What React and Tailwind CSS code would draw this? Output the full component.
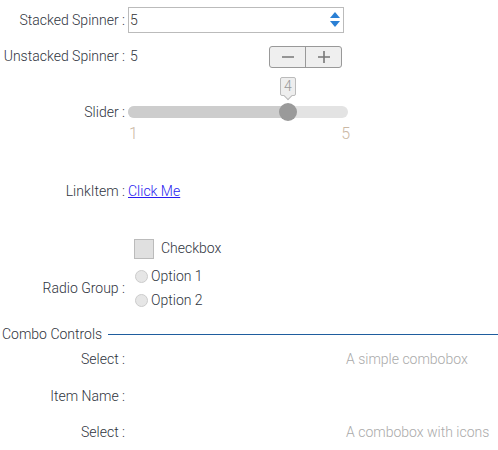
const font = { fontFamily: "Roboto, 'Liberation Sans', sans-serif" };

function Label({ children }) {
  return (
    <div className="w-[125px] shrink-0 text-right whitespace-nowrap text-[14px] font-light text-[#2f3440]">
      {children}
    </div>
  );
}

function StackedSpinner() {
  return (
    <div className="ml-[3px] flex h-[26px] w-[216px] items-center justify-between border border-[#bbb] bg-white pl-[1px] pr-[3px]">
      <span className="text-[14px] text-[#333]">5</span>
      <div className="flex flex-col items-center leading-none">
        <svg width="10" height="7" viewBox="0 0 10 7">
          <path d="M5 0 L10 6 L0 6 Z" fill="#2a7fd4" />
        </svg>
        <svg width="10" height="7" viewBox="0 0 10 7" className="mt-[2px]">
          <path d="M0 0 L10 0 L5 6 Z" fill="#2a7fd4" />
        </svg>
      </div>
    </div>
  );
}

function StepButtons() {
  return (
    <div className="flex h-[22px] w-[73px] overflow-hidden rounded-[3px] border border-[#999] bg-[#efefef]">
      <button className="flex flex-1 items-center justify-center border-r border-[#999]">
        <svg width="14" height="14" viewBox="0 0 14 14">
          <path d="M1 7 H13" stroke="#777" strokeWidth="1.6" />
        </svg>
      </button>
      <button className="flex flex-1 items-center justify-center">
        <svg width="14" height="14" viewBox="0 0 14 14">
          <path d="M1 7 H13 M7 1 V13" stroke="#777" strokeWidth="1.6" />
        </svg>
      </button>
    </div>
  );
}

function Slider() {
  const pct = 75;
  return (
    <div className="relative ml-[3px] h-[22px] w-[220px]">
      <div className="absolute left-0 right-0 top-[5px] h-[12px] rounded-full bg-[#e3e3e3]" />
      <div
        className="absolute left-0 top-[5px] h-[12px] rounded-full bg-[#cdcdcd]"
        style={{ width: `${pct}%` }}
      />
      <div className="absolute left-[151px] top-[2px] h-[18px] w-[18px] rounded-full bg-[#9a9a9a]" />
      <div className="absolute left-[152px] top-[-24px] flex h-[19px] w-[16px] items-center justify-center rounded-[2px] border border-[#bbb] bg-[#eee] text-[14px] font-light text-[#999]">
        4
        <div className="absolute bottom-[-4px] left-[4px] h-[6px] w-[6px] rotate-45 border-b border-r border-[#bbb] bg-[#eee]" />
      </div>
    </div>
  );
}

export default function App() {
  return (
    <div className="w-[498px] bg-white text-[14px] font-light text-[#2f3440]" style={font}>
      <div className="flex items-center pt-[7px]">
        <Label>Stacked Spinner :</Label>
        <StackedSpinner />
      </div>

      <div className="mt-[12px] flex h-[23px] items-center">
        <Label>Unstacked Spinner :</Label>
        <span className="ml-[5px]">5</span>
        <div className="ml-auto mr-[156px]">
          <StepButtons />
        </div>
      </div>

      <div className="mt-[33px] flex h-[22px] items-center">
        <Label>Slider :</Label>
        <Slider />
      </div>

      <div className="flex h-[22px] w-[350px] items-center justify-between pl-[129px] text-[16px] text-[#cbb8a4]">
        <span>1</span>
        <span>5</span>
      </div>

      <div className="mt-[38px] flex h-[16px] items-center">
        <Label>LinkItem :</Label>
        <a href="#" className="ml-[3px] text-[#2a1df0] underline">
          Click Me
        </a>
      </div>

      <div className="mt-[39px] flex h-[21px] items-center pl-[134px]">
        <div className="h-[20px] w-[20px] border border-[#bbb] bg-[#e0e0e0]" />
        <span className="ml-[7px]">Checkbox</span>
      </div>

      <div className="mt-[5px] flex items-center">
        <Label>Radio Group :</Label>
        <div className="ml-[10px] flex flex-col">
          {["Option 1", "Option 2"].map((o) => (
            <div key={o} className="flex h-[24px] items-center">
              <div className="h-[13px] w-[13px] rounded-full border border-[#ccc] bg-[#e6e6e6]" />
              <span className="ml-[3px]">{o}</span>
            </div>
          ))}
        </div>
      </div>

      <div className="mt-[14px] flex h-[16px] items-center pl-[2px]">
        <span className="whitespace-nowrap">Combo Controls</span>
        <div className="ml-[6px] h-px flex-1 bg-[#1f5d9e]" />
      </div>

      <div className="mt-[9px] flex h-[16px] items-center">
        <Label>Select :</Label>
        <span className="ml-[221px] text-[#aaa]">A simple combobox</span>
      </div>

      <div className="mt-[21px] flex h-[16px] items-center">
        <Label>Item Name :</Label>
      </div>

      <div className="mt-[20px] flex h-[16px] items-center">
        <Label>Select :</Label>
        <span className="ml-[221px] text-[#aaa]">A combobox with icons</span>
      </div>
    </div>
  );
}
